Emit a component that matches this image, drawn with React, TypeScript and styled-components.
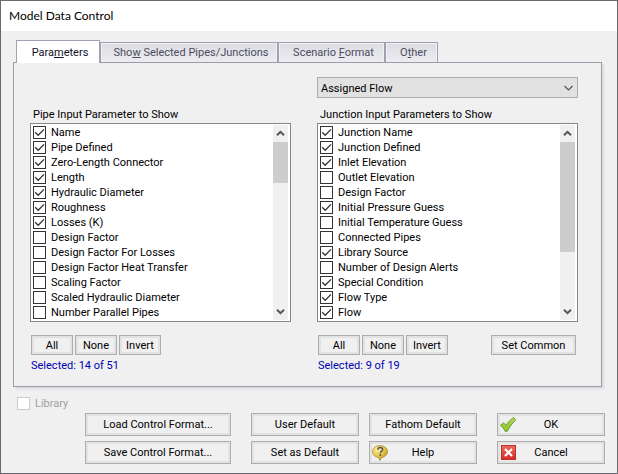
import React, { useState } from "react";
import styled, { createGlobalStyle, css } from "styled-components";

const GlobalStyle = createGlobalStyle`
  * { box-sizing: border-box; }
  body {
    margin: 0;
    background: #f0f0f0;
    color: #000;
    font: 11px/15px "Roboto", "Liberation Sans", sans-serif;
  }
  button, select, input { font: inherit; color: inherit; margin: 0; }
`;

const Dialog = styled.main`
  min-height: 100vh;
  border: 1px solid #6a6a6c;
  background: #f0f0f0;
`;

const TitleBar = styled.header`
  height: 30px;
  padding: 0 8px;
  display: flex;
  align-items: center;
  background: #fff;
`;

const Title = styled.h1`
  margin: 0;
  font: 12px/16px "Lato", "Open Sans", sans-serif;
`;

const TabSection = styled.section`
  padding: 9px 15px 0 12px;
`;

const TabStrip = styled.div`
  display: flex;
  align-items: flex-end;
  padding-left: 3px;
`;

const Tab = styled.button<{ $active: boolean; $width: number }>`
  width: ${(p) => p.$width}px;
  height: 20px;
  padding: 0 0 0 4px;
  border: 1px solid #a0a0b0;
  border-bottom: 0;
  background: linear-gradient(#dcdce2, #ececf0);
  box-shadow: inset 1px 1px #f0f0f5, inset -1px 0 #f0f0f5;
  color: #4c4c5e;
  white-space: nowrap;
  ${(p) =>
    p.$active &&
    css`
      height: 23px;
      margin-bottom: -1px;
      z-index: 1;
      background: #fff;
      box-shadow: none;
      color: #101028;
    `}
`;

const Panel = styled.div`
  display: grid;
  grid-template-columns: 1fr 1fr;
  column-gap: 26px;
  padding: 14px 23px 13px 16px;
  border: 1px solid #9a9caa;
  box-shadow: 2px 2px 2px #dcdce0;
`;

const Column = styled.section`
  display: flex;
  flex-direction: column;
  min-width: 0;
`;

const SelectSlot = styled.div`
  position: relative;
  height: 21px;
  margin-bottom: 9px;
`;

const Select = styled.select`
  appearance: none;
  width: 100%;
  height: 21px;
  padding: 1px 20px 0 3px;
  border: 1px solid #adadad;
  border-radius: 0;
  background: #e1e1e1;
`;

const SelectArrow = styled.svg`
  position: absolute;
  right: 4px;
  top: 8px;
  pointer-events: none;
`;

const Heading = styled.h2`
  margin: 0 0 1px;
  padding-left: 3px;
  font: inherit;
`;

const ListBox = styled.div`
  display: flex;
  padding: 1px 2px;
  border: 1px solid #828790;
  background: #fff;
`;

const Items = styled.ul`
  flex: 1;
  min-width: 0;
  margin: 0;
  padding: 0;
  list-style: none;
`;

const CheckLabel = styled.label<{ $disabled?: boolean }>`
  display: flex;
  align-items: center;
  gap: 5px;
  height: 15px;
  white-space: nowrap;
  color: ${(p) => (p.$disabled ? "#a0a0a0" : "#000")};
`;

const BoxFrame = styled.span`
  position: relative;
  display: flex;
  width: 13px;
  height: 13px;
`;

const CheckInput = styled.input`
  appearance: none;
  width: 13px;
  height: 13px;
  border: 1px solid #333;
  background: #fff;
  &:disabled { border-color: #ccc; }
`;

const CheckMark = styled.svg`
  position: absolute;
  inset: 0;
  pointer-events: none;
`;

const ScrollBar = styled.div`
  display: flex;
  flex-direction: column;
  width: 15px;
  background: #f0f0f0;
`;

const ScrollButton = styled.button`
  display: flex;
  align-items: center;
  justify-content: center;
  height: 17px;
  padding: 0;
  border: 0;
  background: none;
`;

const ScrollTrack = styled.div`
  flex: 1;
`;

const ScrollThumb = styled.div<{ $height: number }>`
  height: ${(p) => p.$height}px;
  background: #cdcdcd;
`;

const ButtonRow = styled.div`
  display: flex;
  gap: 2px;
  margin: 13px 2px 3px 1px;
`;

const PushButton = styled.button<{ $size?: "small" | "wide" }>`
  display: flex;
  align-items: center;
  justify-content: center;
  width: ${(p) => (p.$size === "small" ? "42px" : p.$size === "wide" ? "85px" : "100%")};
  height: ${(p) => (p.$size ? "20px" : "23px")};
  margin-left: ${(p) => (p.$size === "wide" ? "auto" : "0")};
  padding: 0;
  border: 1px solid #adadad;
  background: #f0f0f0;
  box-shadow: inset 0 0 0 2px #e2e2e2;
  white-space: nowrap;
`;

const IconButton = styled(PushButton)`
  display: grid;
  grid-template-columns: 16px 1fr 16px;
  padding: 0 2px;
`;

const Count = styled.p`
  margin: 0;
  padding-left: 1px;
  color: #0000b4;
`;

const LibraryRow = styled.div`
  padding: 9px 16px 0;
`;

const Footer = styled.footer`
  display: grid;
  grid-template-columns: 146fr 226fr 108fr;
  column-gap: 20px;
  padding: 2px 12px 9px 84px;
`;

const ButtonGroup = styled.div<{ $columns: number }>`
  display: grid;
  grid-template-columns: repeat(${(p) => p.$columns}, 1fr);
  gap: 5px 10px;
`;

function CheckItem(props: { label: string; initial?: boolean; disabled?: boolean }) {
  const [on, setOn] = useState(!!props.initial);
  return (
    <CheckLabel $disabled={props.disabled}>
      <BoxFrame>
        <CheckInput
          type="checkbox"
          checked={on}
          disabled={props.disabled}
          onChange={() => setOn(!on)}
        />
        {on && (
          <CheckMark width="13" height="13" viewBox="0 0 13 13" aria-hidden="true">
            <path d="M2.2 6.3l3 3L11 3.4" fill="none" stroke="#333" strokeWidth="1.3" />
          </CheckMark>
        )}
      </BoxFrame>
      <span>{props.label}</span>
    </CheckLabel>
  );
}

function Chevron({ up }: { up?: boolean }) {
  return (
    <svg width="9" height="7" viewBox="0 0 9 7" aria-hidden="true">
      <path
        d={up ? "M1 5.3L4.5 1.8L8 5.3" : "M1 1.7L4.5 5.2L8 1.7"}
        fill="none"
        stroke="#555"
        strokeWidth="2"
      />
    </svg>
  );
}

type Item = [string, boolean];

function ParameterList(props: { items: Item[]; thumb: number }) {
  return (
    <ListBox>
      <Items>
        {props.items.map(([label, on]) => (
          <li key={label}>
            <CheckItem label={label} initial={on} />
          </li>
        ))}
      </Items>
      <ScrollBar>
        <ScrollButton aria-label="Scroll up"><Chevron up /></ScrollButton>
        <ScrollTrack><ScrollThumb $height={props.thumb} /></ScrollTrack>
        <ScrollButton aria-label="Scroll down"><Chevron /></ScrollButton>
      </ScrollBar>
    </ListBox>
  );
}

const pipeItems: Item[] = [
  ["Name", true],
  ["Pipe Defined", true],
  ["Zero-Length Connector", true],
  ["Length", true],
  ["Hydraulic Diameter", true],
  ["Roughness", true],
  ["Losses (K)", true],
  ["Design Factor", false],
  ["Design Factor For Losses", false],
  ["Design Factor Heat Transfer", false],
  ["Scaling Factor", false],
  ["Scaled Hydraulic Diameter", false],
  ["Number Parallel Pipes", false],
];

const junctionItems: Item[] = [
  ["Junction Name", true],
  ["Junction Defined", true],
  ["Inlet Elevation", true],
  ["Outlet Elevation", false],
  ["Design Factor", false],
  ["Initial Pressure Guess", true],
  ["Initial Temperature Guess", false],
  ["Connected Pipes", false],
  ["Library Source", true],
  ["Number of Design Alerts", false],
  ["Special Condition", true],
  ["Flow Type", true],
  ["Flow", true],
];

function OkIcon() {
  return (
    <svg width="16" height="16" viewBox="0 0 16 16" aria-hidden="true">
      <defs>
        <linearGradient id="ok" x1="0" y1="0" x2="0" y2="1">
          <stop offset="0" stopColor="#b4dc50" />
          <stop offset="1" stopColor="#8cc228" />
        </linearGradient>
      </defs>
      <path
        d="M0.5 8.4L3.6 5.8L6 8.4C8 5.2 10.6 2.4 13.6 0.6L15.7 2.8C12.4 6 9.6 9.8 7.4 14.3H5.2C4.2 12.2 2.6 10.2 0.5 8.4Z"
        fill="url(#ok)"
        stroke="#6b9c3c"
        strokeLinejoin="round"
      />
    </svg>
  );
}

function CancelIcon() {
  return (
    <svg width="16" height="16" viewBox="0 0 16 16" aria-hidden="true">
      <defs>
        <linearGradient id="cancel" x1="0" y1="0" x2="0" y2="1">
          <stop offset="0" stopColor="#ee6a60" />
          <stop offset="1" stopColor="#d92a28" />
        </linearGradient>
      </defs>
      <rect x="1.5" y="0.5" width="14" height="14" fill="url(#cancel)" stroke="#b8322c" />
      <path d="M5 4L12 11M12 4L5 11" stroke="#fff" strokeWidth="2.2" />
    </svg>
  );
}

function HelpIcon() {
  return (
    <svg width="16" height="16" viewBox="0 0 16 16" aria-hidden="true">
      <defs>
        <radialGradient id="help" cx="0.35" cy="0.25" r="0.8">
          <stop offset="0" stopColor="#fff3a8" />
          <stop offset="0.55" stopColor="#e6c548" />
          <stop offset="1" stopColor="#b48a1c" />
        </radialGradient>
      </defs>
      <path
        d="M8 0.6C12.4 0.6 15.5 3.2 15.5 6.6C15.5 9.7 13 11.8 10 12.4L7.8 15.4L6.8 12.6C3 12.2 0.5 9.8 0.5 6.6C0.5 3.2 3.6 0.6 8 0.6Z"
        fill="url(#help)"
        stroke="#b08c30"
        strokeWidth="0.8"
      />
      <path
        d="M5.8 4.8C5.9 3.2 7 2.5 8.2 2.5C9.6 2.5 10.6 3.3 10.6 4.6C10.6 6.2 8.3 6.3 8.3 8.2"
        fill="none"
        stroke="#505468"
        strokeWidth="1.5"
      />
      <rect x="7.5" y="9.2" width="1.7" height="1.7" fill="#505468" />
    </svg>
  );
}

function SelectionButtons({ children }: { children?: React.ReactNode }) {
  return (
    <ButtonRow>
      <PushButton $size="small">All</PushButton>
      <PushButton $size="small">None</PushButton>
      <PushButton $size="small">Invert</PushButton>
      {children}
    </ButtonRow>
  );
}

export default function App() {
  return (
    <Dialog>
      <GlobalStyle />
      <TitleBar><Title>Model Data Control</Title></TitleBar>
      <TabSection>
        <TabStrip role="tablist">
          <Tab role="tab" aria-selected="true" $active $width={84}><span>Para<u>m</u>eters</span></Tab>
          <Tab role="tab" aria-selected="false" $active={false} $width={178}><span>Sho<u>w</u> Selected Pipes/Junctions</span></Tab>
          <Tab role="tab" aria-selected="false" $active={false} $width={107}><span>Scenario <u>F</u>ormat</span></Tab>
          <Tab role="tab" aria-selected="false" $active={false} $width={53}><span>O<u>t</u>her</span></Tab>
        </TabStrip>
        <Panel role="tabpanel">
          <Column>
            <SelectSlot />
            <Heading>Pipe Input Parameter to Show</Heading>
            <ParameterList items={pipeItems} thumb={41} />
            <SelectionButtons />
            <Count>Selected: 14 of 51</Count>
          </Column>
          <Column>
            <SelectSlot>
              <Select aria-label="Junction type" defaultValue="flow">
                <option value="flow">Assigned Flow</option>
              </Select>
              <SelectArrow width="11" height="7" viewBox="0 0 11 7" aria-hidden="true">
                <path d="M1.5 1L5.5 5L9.5 1" fill="none" stroke="#555" strokeWidth="1.2" />
              </SelectArrow>
            </SelectSlot>
            <Heading>Junction Input Parameters to Show</Heading>
            <ParameterList items={junctionItems} thumb={110} />
            <SelectionButtons>
              <PushButton $size="wide">Set Common</PushButton>
            </SelectionButtons>
            <Count>Selected: 9 of 19</Count>
          </Column>
        </Panel>
      </TabSection>
      <LibraryRow><CheckItem label="Library" disabled /></LibraryRow>
      <Footer>
        <ButtonGroup $columns={1}>
          <PushButton>Load Control Format...</PushButton>
          <PushButton>Save Control Format...</PushButton>
        </ButtonGroup>
        <ButtonGroup $columns={2}>
          <PushButton>User Default</PushButton>
          <PushButton>Fathom Default</PushButton>
          <PushButton>Set as Default</PushButton>
          <IconButton><HelpIcon /><span>Help</span></IconButton>
        </ButtonGroup>
        <ButtonGroup $columns={1}>
          <IconButton><OkIcon /><span>OK</span></IconButton>
          <IconButton><CancelIcon /><span>Cancel</span></IconButton>
        </ButtonGroup>
      </Footer>
    </Dialog>
  );
}
